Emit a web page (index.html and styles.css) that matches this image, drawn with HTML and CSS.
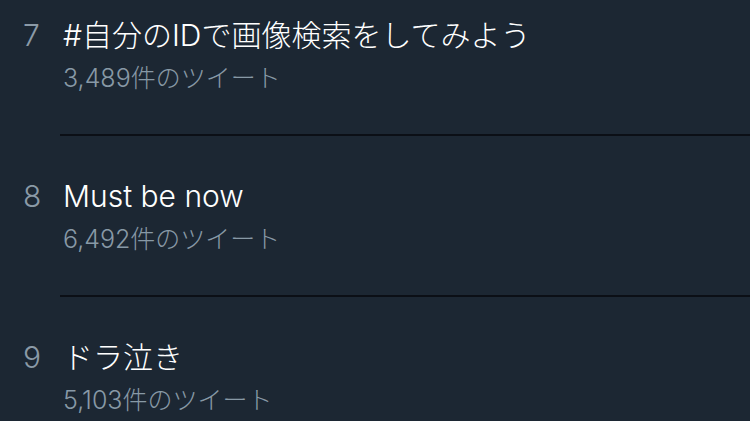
FILE: index.html
```html
<!DOCTYPE html>
<html lang="ja">
<head>
<meta charset="utf-8">
<title>トレンド</title>
<link rel="stylesheet" href="styles.css">
</head>
<body>
<ol class="trends">
  <li class="trend">
    <span class="rank">7</span>
    <div class="body">
      <div class="title">#自分のIDで画像検索をしてみよう</div>
      <div class="count">3,489件のツイート</div>
    </div>
  </li>
  <li class="trend">
    <span class="rank">8</span>
    <div class="body">
      <div class="title">Must be now</div>
      <div class="count">6,492件のツイート</div>
    </div>
  </li>
  <li class="trend">
    <span class="rank">9</span>
    <div class="body">
      <div class="title">ドラ泣き</div>
      <div class="count">5,103件のツイート</div>
    </div>
  </li>
</ol>
</body>
</html>
```
FILE: styles.css
```css
html, body {
  margin: 0;
  padding: 0;
  background: #1c2733;
  height: 100%;
  overflow: hidden;
}
body {
  font-family: Inter, "Noto Sans CJK JP", sans-serif;
}
.trends {
  list-style: none;
  margin: -25px 0 0 0;
  padding: 0;
}
.trend {
  display: flex;
  padding-left: 23px;
}
.rank {
  width: 37px;
  padding-top: 42px;
  font-size: 30px;
  line-height: 36px;
  font-weight: 300;
  color: #8b9aa7;
}
.body {
  flex: 1;
  padding: 42px 0 41px 3px;
  border-bottom: 2px solid #0b0f16;
}
.title {
  font-size: 30px;
  line-height: 36px;
  font-weight: 300;
  color: #ffffff;
  white-space: nowrap;
}
.count {
  margin-top: 10px;
  font-size: 25px;
  line-height: 30px;
  font-weight: 300;
  color: #8899a6;
  white-space: nowrap;
}
```
